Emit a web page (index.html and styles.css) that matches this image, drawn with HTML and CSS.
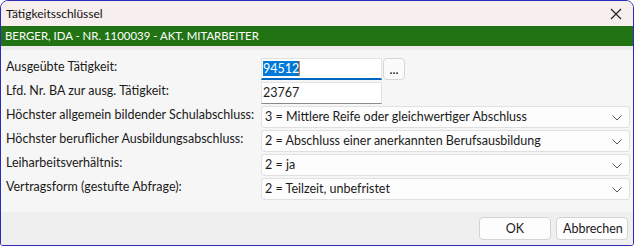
FILE: index.html
```html
<!DOCTYPE html>
<html lang="de">
<head>
  <meta charset="UTF-8">
  <title>Tätigkeitsschlüssel</title>
  <link rel="stylesheet" href="styles.css">
</head>
<body>
  <div class="window">
    <div class="titlebar">
      <span class="title">Tätigkeitsschlüssel</span>
      <svg class="close" width="12" height="12" viewBox="0 0 12 12">
        <path d="M1 1 L11 11 M11 1 L1 11" stroke="#222" stroke-width="1.2" fill="none"/>
      </svg>
    </div>
    <div class="banner">BERGER, IDA - NR. 1100039 - AKT. MITARBEITER</div>
    <div class="strip"></div>

    <div class="content">
      <div class="row">
        <label class="lbl">Ausgeübte Tätigkeit:</label>
        <div class="field short">
          <div class="input focused"><span class="sel">94512</span><span class="caret"></span></div>
          <button class="dots">...</button>
        </div>
      </div>
      <div class="row">
        <label class="lbl">Lfd. Nr. BA zur ausg. Tätigkeit:</label>
        <div class="field short">
          <div class="input">23767</div>
        </div>
      </div>
      <div class="row">
        <label class="lbl">Höchster allgemein bildender Schulabschluss:</label>
        <div class="select">3 = Mittlere Reife oder gleichwertiger Abschluss<svg class="chev" width="10" height="6" viewBox="0 0 10 6"><path d="M0.5 0.5 L5 5 L9.5 0.5" stroke="#555" fill="none"/></svg></div>
      </div>
      <div class="row">
        <label class="lbl">Höchster beruflicher Ausbildungsabschluss:</label>
        <div class="select">2 = Abschluss einer anerkannten Berufsausbildung<svg class="chev" width="10" height="6" viewBox="0 0 10 6"><path d="M0.5 0.5 L5 5 L9.5 0.5" stroke="#555" fill="none"/></svg></div>
      </div>
      <div class="row">
        <label class="lbl">Leiharbeitsverhältnis:</label>
        <div class="select">2 = ja<svg class="chev" width="10" height="6" viewBox="0 0 10 6"><path d="M0.5 0.5 L5 5 L9.5 0.5" stroke="#555" fill="none"/></svg></div>
      </div>
      <div class="row">
        <label class="lbl">Vertragsform (gestufte Abfrage):</label>
        <div class="select">2 = Teilzeit, unbefristet<svg class="chev" width="10" height="6" viewBox="0 0 10 6"><path d="M0.5 0.5 L5 5 L9.5 0.5" stroke="#555" fill="none"/></svg></div>
      </div>
    </div>

    <div class="footer">
      <button class="btn">OK</button>
      <button class="btn">Abbrechen</button>
    </div>
  </div>
</body>
</html>
```

FILE: styles.css
```css
/* Dialog */
body {
  margin: 0;
  font-family: Lato, "Noto Sans", sans-serif;
  font-size: 12.5px;
  color: #1a1a1a;
}
.window {
  width: 634px;
  height: 246px;
  box-sizing: border-box;
  border: 1px solid #2b2bb8;
  border-radius: 8px 8px 3px 3px;
  display: flex;
  flex-direction: column;
  overflow: hidden;
  background-color: #f6f6f6;
}
.titlebar {
  height: 25px;
  background-color: #f7efee;
  display: flex;
  align-items: center;
  justify-content: space-between;
  padding: 0 11px 0 5px;
}
.title {
  color: #111;
  font-size: 12px;
}
.banner {
  height: 20px;
  line-height: 20px;
  background-color: #227314; /* grüne Leiste */
  color: #fff;
  font-size: 11.4px;
  padding-left: 4px;
}
.strip {
  height: 4px;
  background-color: #ececec;
}
.content {
  flex: 1;
  padding: 8px 3px 0 5px;
  display: flex;
  flex-direction: column;
  gap: 2px;
}
.row {
  display: flex;
  height: 22px;
}
.lbl {
  width: 255px;
  flex-shrink: 0;
  white-space: nowrap;
  padding-top: 1px;
}
.field {
  display: flex;
  gap: 1px;
}
.input {
  width: 121px;
  box-sizing: border-box;
  height: 22px;
  background: #fff;
  border: 1px solid #e3e3e3;
  border-bottom-color: #8a8a8a;
  padding: 2px 2px 0 1px;
  display: flex;
  align-items: flex-start;
}
.input.focused {
  border-bottom: 2px solid #0067c0;
}
.sel {
  background-color: #0078d7;
  color: #fff;
}
.caret {
  width: 1px;
  height: 15px;
  background-color: #e8782a;
}
.dots {
  width: 22px;
  height: 22px;
  border: 1px solid #d6d6d6;
  border-radius: 4px;
  background: #fbfbfb;
  font: inherit;
  padding: 0;
}
.select {
  flex: 1;
  height: 22px;
  box-sizing: border-box;
  background-color: #fdfdfd;
  border: 1px solid #e0e0e0;
  border-radius: 3px;
  padding: 2px 0 0 3px;
  display: flex;
  justify-content: space-between;
  align-items: flex-start;
}
.chev {
  margin: 6px 7px 0 0;
}
.footer {
  height: 33px;
  background-color: #efefef;
  display: flex;
  justify-content: flex-end;
  align-items: center;
  gap: 5px;
  padding-right: 5px;
}
.btn {
  width: 72px;
  height: 23px;
  border: 1px solid #d3d3d3;
  border-radius: 4px;
  background-color: #fdfdfd;
  font: inherit;
  color: #1a1a1a;
}
```
